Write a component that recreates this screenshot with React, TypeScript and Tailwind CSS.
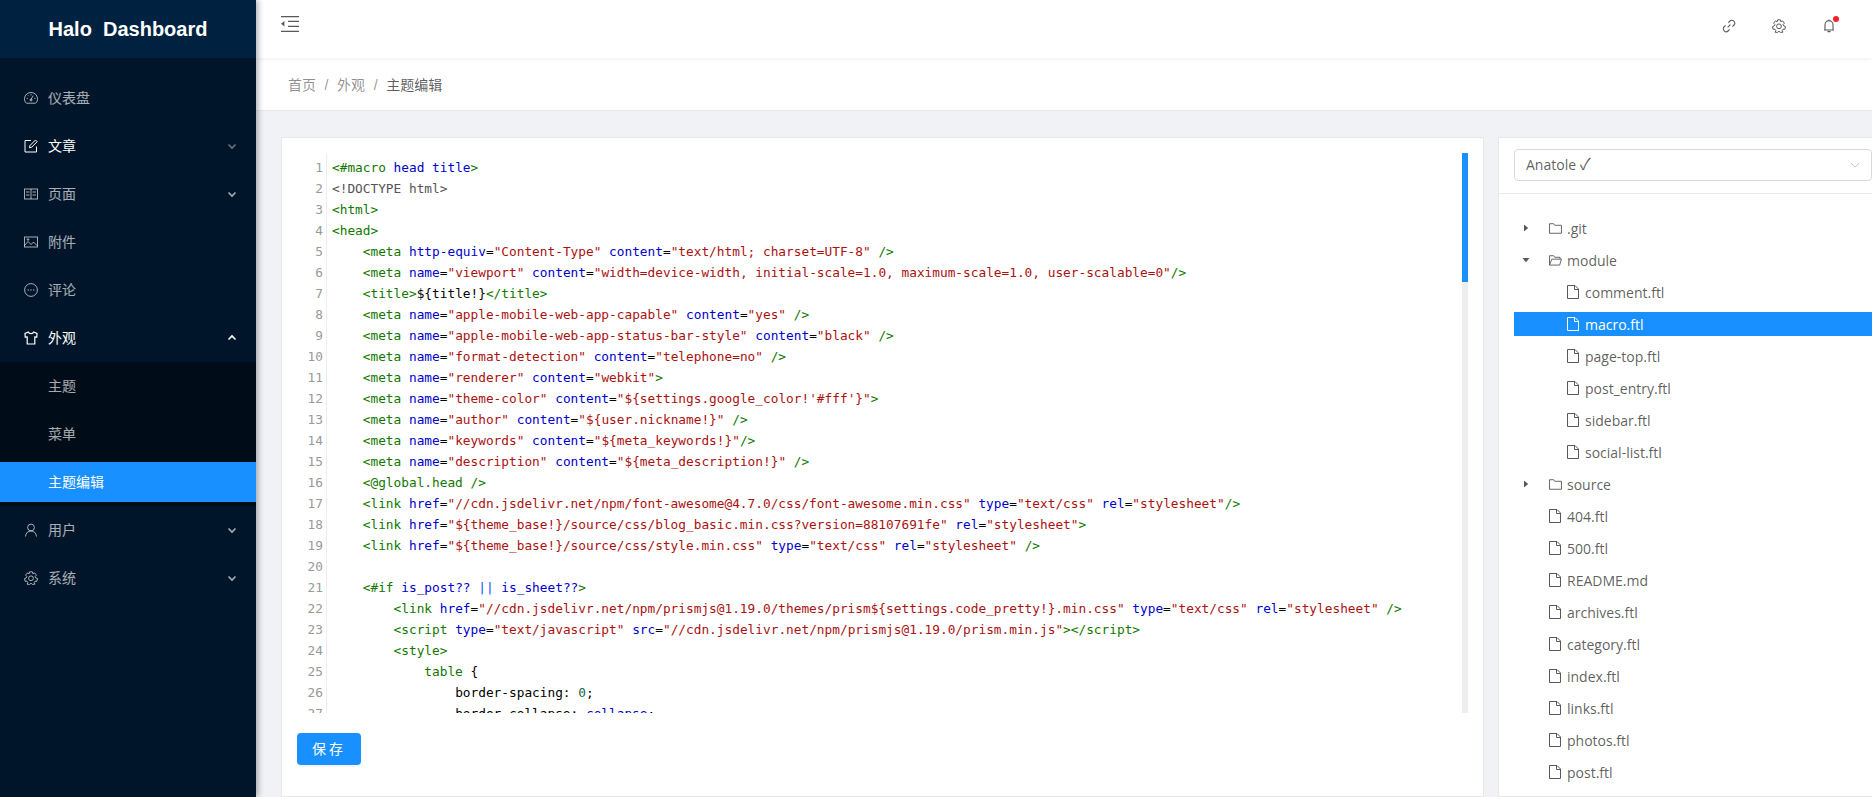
import React from "react";

const T = ({ c }: { c: string }) => <span className="text-[#117700]">{c}</span>;
const A = ({ c }: { c: string }) => <span className="text-[#0000cc]">{c}</span>;
const S = ({ c }: { c: string }) => <span className="text-[#aa1111]">{c}</span>;

const meta = (pairs: [string, string][], end: string) => (
  <>
    <T c="<meta" />
    {pairs.map(([a, s], i) => (
      <React.Fragment key={i}>
        {" "}
        <A c={a} />=<S c={s} />
      </React.Fragment>
    ))}
    <T c={end} />
  </>
);
const tag = (name: string, pairs: [string, string][], end: string) => (
  <>
    <T c={"<" + name} />
    {pairs.map(([a, s], i) => (
      <React.Fragment key={i}>
        {" "}
        <A c={a} />=<S c={s} />
      </React.Fragment>
    ))}
    <T c={end} />
  </>
);

const lines: React.ReactNode[] = [
  <><T c="<#macro" /> <A c="head" /> <A c="title" /><T c=">" /></>,
  <span className="text-[#555555]">{"<!DOCTYPE html>"}</span>,
  <T c="<html>" />,
  <T c="<head>" />,
  <>{"    "}{meta([["http-equiv", '"Content-Type"'], ["content", '"text/html; charset=UTF-8"']], " />")}</>,
  <>{"    "}{meta([["name", '"viewport"'], ["content", '"width=device-width, initial-scale=1.0, maximum-scale=1.0, user-scalable=0"']], "/>")}</>,
  <>{"    "}<T c="<title>" /><span>{"${title!}"}</span><T c="</title>" /></>,
  <>{"    "}{meta([["name", '"apple-mobile-web-app-capable"'], ["content", '"yes"']], " />")}</>,
  <>{"    "}{meta([["name", '"apple-mobile-web-app-status-bar-style"'], ["content", '"black"']], " />")}</>,
  <>{"    "}{meta([["name", '"format-detection"'], ["content", '"telephone=no"']], " />")}</>,
  <>{"    "}{meta([["name", '"renderer"'], ["content", '"webkit"']], ">")}</>,
  <>{"    "}{meta([["name", '"theme-color"'], ["content", `"\${settings.google_color!'#fff'}"`]], ">")}</>,
  <>{"    "}{meta([["name", '"author"'], ["content", '"${user.nickname!}"']], " />")}</>,
  <>{"    "}{meta([["name", '"keywords"'], ["content", '"${meta_keywords!}"']], "/>")}</>,
  <>{"    "}{meta([["name", '"description"'], ["content", '"${meta_description!}"']], " />")}</>,
  <>{"    "}<T c="<@global.head />" /></>,
  <>{"    "}{tag("link", [["href", '"//cdn.jsdelivr.net/npm/font-awesome@4.7.0/css/font-awesome.min.css"'], ["type", '"text/css"'], ["rel", '"stylesheet"']], "/>")}</>,
  <>{"    "}{tag("link", [["href", '"${theme_base!}/source/css/blog_basic.min.css?version=88107691fe"'], ["rel", '"stylesheet"']], ">")}</>,
  <>{"    "}{tag("link", [["href", '"${theme_base!}/source/css/style.min.css"'], ["type", '"text/css"'], ["rel", '"stylesheet"']], " />")}</>,
  <>{" "}</>,
  <>{"    "}<T c="<#if" /> <A c="is_post??" /> <span className="text-[#0055ff]">||</span> <A c="is_sheet??" /><T c=">" /></>,
  <>{"        "}{tag("link", [["href", '"//cdn.jsdelivr.net/npm/prismjs@1.19.0/themes/prism${settings.code_pretty!}.min.css"'], ["type", '"text/css"'], ["rel", '"stylesheet"']], " />")}</>,
  <>{"        "}{tag("script", [["type", '"text/javascript"'], ["src", '"//cdn.jsdelivr.net/npm/prismjs@1.19.0/prism.min.js"']], "></script>")}</>,
  <>{"        "}<T c="<style>" /></>,
  <>{"            "}<T c="table" /> {"{"}</>,
  <>{"                "}border-spacing: <span className="text-[#116644]">0</span>;</>,
  <>{"                "}border-collapse: <A c="collapse" />;</>,
];

const Chev = ({ up, dim }: { up?: boolean; dim?: boolean }) => (
  <svg width="10" height="10" viewBox="0 0 10 10" className={"ml-auto " + (dim ? "opacity-40" : up ? "opacity-100" : "opacity-65")}>
    <path d={up ? "M1.5 6.5 L5 3 L8.5 6.5" : "M1.5 3.5 L5 7 L8.5 3.5"} fill="none" stroke="#fff" strokeWidth="1.6" />
  </svg>
);

const I = ({ children }: { children: React.ReactNode }) => (
  <svg width="14" height="14" viewBox="0 0 14 14" fill="none" stroke="currentColor" strokeWidth="1" className="shrink-0">
    {children}
  </svg>
);

const icons: Record<string, React.ReactNode> = {
  dash: <I><path d="M2.4 12.2 C.9 11 .4 9.2 .5 7.4 C.8 3.8 3.6 1.5 7 1.5 C10.4 1.5 13.2 3.8 13.5 7.4 C13.6 9.2 13.1 11 11.6 12.2 Z" /><path d="M7 8.5 L9.2 4.6 M2.6 7.4 H3.8 M11.4 7.4 H10.2 M4 4.4 L4.8 5.2 M7 3.2 V4.4" /><circle cx="7" cy="9" r="1" /></I>,
  edit: <I><path d="M12.5 7.5 V13 H1 V1.5 H7" /><path d="M5.5 8.8 L6 6.5 L11.5 1 L13.2 2.7 L7.7 8.2 Z" /></I>,
  book: <I><rect x=".5" y="2" width="13" height="10" /><path d="M7 2 V12 M2 5 H5.5 M2 8 H5.5 M8.5 5 H12 M8.5 8 H12" /></I>,
  pic: <I><rect x=".5" y="2" width="13" height="10" /><path d="M.5 10.5 L4 6.5 L7 9.5 L9.5 7 L13.5 11" /><circle cx="4" cy="4.5" r=".8" /></I>,
  msg: (
    <I>
      <circle cx="7" cy="7" r="6.4" />
      <circle cx="4.2" cy="7" r=".7" fill="currentColor" stroke="none" />
      <circle cx="7" cy="7" r=".7" fill="currentColor" stroke="none" />
      <circle cx="9.8" cy="7" r=".7" fill="currentColor" stroke="none" />
    </I>
  ),
  shirt: <I><path d="M4.5 1 L1 2.5 L1.2 6 L3.2 5.8 V13 H10.8 V5.8 L12.8 6 L13 2.5 L9.5 1 C9.2 3.2 4.8 3.2 4.5 1 Z" strokeWidth="1.2" /></I>,
  user: <I><circle cx="7" cy="4.5" r="3.4" /><path d="M1.5 13.5 C1.8 10 4 8 7 8 C10 8 12.2 10 12.5 13.5" /></I>,
  gear: <I><path d="M5.7 .8 H8.3 L8.8 2.7 L10.6 1.9 L12.4 4.2 L11.1 5.6 L11.9 7 L13.5 7.6 L12.9 10.3 L11 10.2 L10.2 11.6 L10.9 13.2 L8.4 13.4 L7 12.2 L5.6 13.4 L3.1 13.2 L3.8 11.6 L3 10.2 L1.1 10.3 L.5 7.6 L2.1 7 L2.9 5.6 L1.6 4.2 L3.4 1.9 L5.2 2.7 Z" strokeLinejoin="round" /><circle cx="7" cy="7.3" r="2.4" /></I>,
};

const Item = ({ icon, label, chev, bright }: { icon: string; label: string; chev?: "up" | "down" | "dim"; bright?: boolean }) => (
  <div className={"h-10 mb-2 flex items-center gap-2.5 pl-6 pr-[19px] text-sm " + (bright ? "text-white" : "text-white/65")}>
    {icons[icon]}
    <span>{label}</span>
    {chev && <Chev up={chev === "up"} dim={chev === "dim"} />}
  </div>
);

const FileIcon = ({ color = "#595959" }: { color?: string }) => (
  <svg width="12" height="14" viewBox="0 0 12 14" fill="none" stroke={color} strokeWidth="1" className="shrink-0">
    <path d="M.5 .5 H8 L11.5 4 V13.5 H.5 Z M7.5 .5 V4.5 H11.5" />
  </svg>
);

const Caret = ({ open }: { open?: boolean }) => (
  <svg width="10" height="10" viewBox="0 0 10 10" className="shrink-0" fill="#595959">
    {open ? <path d="M1.5 3 H8.5 L5 7.2 Z" /> : <path d="M3 1.5 L7.2 5 L3 8.5 Z" />}
  </svg>
);

const Folder = ({ open }: { open?: boolean }) => (
  <svg width="13" height="11" viewBox="0 0 14 12" fill="none" stroke="#595959" strokeWidth="1" className="shrink-0">
    {open ? <path d="M.5 11 V.8 H5 L6.2 2.5 H12 V4.5 M.5 11 H11.5 L13.5 4.5 H3 L.5 11" /> : <path d="M.5 11.2 V.8 H5 L6.2 2.5 H13.5 V11.2 Z" />}
  </svg>
);

const Row = ({ children, selected }: { children: React.ReactNode; selected?: boolean }) => (
  <div className={"h-6 mb-[8px] flex items-center text-sm " + (selected ? "bg-[#1890ff] text-white" : "text-[rgba(0,0,0,0.65)]")}>
    {children}
  </div>
);

const DirRow = ({ name, open }: { name: string; open?: boolean }) => (
  <Row>
    <span className="w-6 mr-[11px] flex justify-center"><Caret open={open} /></span>
    <Folder open={open} />
    <span className="ml-[5px] pt-[2px]">{name}</span>
  </Row>
);

const FileRow = ({ name, indent, selected }: { name: string; indent?: boolean; selected?: boolean }) => (
  <Row selected={selected}>
    <span className={indent ? "w-[53px] shrink-0" : "w-[35px] shrink-0"} />
    <FileIcon color={selected ? "#ffffff" : "#595959"} />
    <span className="ml-[6px] pt-[2px]">{name}</span>
  </Row>
);

export default function App() {
  return (
    <div className="h-[797px] w-[1872px] overflow-hidden flex bg-[#f0f2f5] font-['Liberation_Sans','Noto_Sans_CJK_SC',sans-serif]">
      <aside className="w-[256px] shrink-0 bg-[#001529] shadow-[2px_0_6px_rgba(0,21,41,0.35)] relative z-10 flex flex-col">
        <div className="h-[58px] bg-[#002140] flex items-center justify-center pb-[1px] text-white text-xl font-bold whitespace-pre">Halo  Dashboard</div>
        <nav className="pt-5">
          <Item icon="dash" label="仪表盘" />
          <Item icon="edit" label="文章" chev="dim" bright />
          <Item icon="book" label="页面" chev="down" />
          <Item icon="pic" label="附件" />
          <Item icon="msg" label="评论" />
          <div className="h-10 flex items-center gap-2.5 pl-6 pr-[19px] text-sm text-white">
            {icons.shirt}
            <span>外观</span>
            <Chev up />
          </div>
          <div className="bg-[#000c17] mt-1 mb-1 py-1">
            <div className="h-10 mb-2 flex items-center pl-12 text-sm text-white/65">主题</div>
            <div className="h-10 mb-2 flex items-center pl-12 text-sm text-white/65">菜单</div>
            <div className="h-10 flex items-center pl-12 text-sm text-white bg-[#1890ff]">主题编辑</div>
          </div>
          <Item icon="user" label="用户" chev="down" />
          <Item icon="gear" label="系统" chev="down" />
        </nav>
      </aside>

      <div className="flex-1 min-w-0 flex flex-col">
        <header className="h-[58px] shrink-0 bg-white shadow-[0_1px_4px_rgba(0,21,41,0.08)] relative z-[1] flex items-center pl-[25px] pr-[36px]">
          <svg width="18" height="16" viewBox="0 0 18 16" fill="#595959" className="mb-[10px]">
            <path d="M0 0 H18 V1.3 H0 Z M7 4.7 H18 V6 H7 Z M7 9.7 H18 V11 H7 Z M0 14.7 H18 V16 H0 Z M0 7.8 L3.4 5 V10.6 Z" />
          </svg>
          <div className="ml-auto flex items-center gap-9 pb-[6px] text-[#595959]">
            <svg width="14" height="14" viewBox="0 0 14 14" fill="none" stroke="currentColor" strokeWidth="1.1">
              <path d="M5.6 8.4 L8.4 5.6 M6.4 3.6 L8 2 C9 1 10.6 1 11.8 2.2 C13 3.4 13 5 12 6 L10.4 7.6 M7.6 10.4 L6 12 C5 13 3.4 13 2.2 11.8 C1 10.6 1 9 2 8 L3.6 6.4" />
            </svg>
            {icons.gear}
            <span className="relative flex">
              <svg width="14" height="14" viewBox="0 0 14 14" fill="none" stroke="currentColor" strokeWidth="1.1">
                <path d="M2 11 H12 M3 11 V5.8 C3 3.4 4.8 1.6 7 1.6 C9.2 1.6 11 3.4 11 5.8 V11 M7 .4 V1.6 M5.5 12.6 H8.5" />
              </svg>
              <span className="absolute -top-[3px] -right-[3px] w-[6px] h-[6px] rounded-full bg-[#f5222d]" />
            </span>
          </div>
        </header>

        <div className="h-[53px] shrink-0 bg-white border-b border-[#e8e8e8] flex items-center pl-[32px] pt-[2px] text-sm text-black/45">
          <span>首页</span>
          <span className="mx-[8.6px]">/</span>
          <span>外观</span>
          <span className="mx-[8.6px]">/</span>
          <span className="text-black/65">主题编辑</span>
        </div>

        <main className="flex-1 min-h-0 flex pt-[26px] pl-[25px] gap-[14px]">
          <section className="w-[1203px] shrink-0 bg-white border border-[#e8e8e8] pt-[15px] pl-[15px] pr-[15px] flex flex-col">
            <div className="h-[560px] shrink-0 overflow-hidden flex relative">
              <div className="w-[30px] shrink-0 border-r border-[#eeeeee] mr-[5px] font-['DejaVu_Sans_Mono',monospace] text-[12.79px] leading-[21px] text-[#999999] text-right pr-[3px] pt-[4px] overflow-hidden">
                {lines.map((_, i) => <div key={i} className="h-[21px]">{i + 1}</div>)}
              </div>
              <div className="flex-1 min-w-0 pt-[4px] font-['DejaVu_Sans_Mono',monospace] text-[12.79px] leading-[21px] text-black whitespace-pre overflow-hidden">
                {lines.map((l, i) => <div key={i} className="h-[21px]">{l}</div>)}
              </div>
              <div className="w-[6px] shrink-0 bg-[#eeeeee] ml-2">
                <div className="w-full h-[129px] bg-[#1890ff]" />
              </div>
            </div>
            <button className="mt-5 w-[64px] h-[32px] rounded bg-[#1890ff] text-white text-sm tracking-[3px] shadow-[0_2px_0_rgba(0,0,0,0.045)] self-start">保存</button>
          </section>

          <section className="w-[390px] shrink-0 bg-white border border-[#e8e8e8] flex flex-col">
            <div className="h-[56px] shrink-0 border-b border-[#e8e8e8] pt-[11px] pl-[15px] pr-[15px]">
              <div className="w-full h-8 rounded border border-[#d9d9d9] flex items-center pl-[11px] pr-[11px] text-sm text-black/65 font-['Open_Sans','Noto_Sans_CJK_SC',sans-serif]">
                <span>Anatole <span className="text-base leading-none">✓</span></span>
                <svg width="10" height="10" viewBox="0 0 12 12" className="ml-auto" fill="none" stroke="#bfbfbf" strokeWidth="1.1"><path d="M1 3.5 L6 8.5 L11 3.5" /></svg>
              </div>
            </div>
            <div className="pt-[22px] pl-[15px] pr-[15px] font-['Open_Sans','Noto_Sans_CJK_SC',sans-serif]">
              <DirRow name=".git" />
              <DirRow name="module" open />
              <FileRow name="comment.ftl" indent />
              <FileRow name="macro.ftl" indent selected />
              <FileRow name="page-top.ftl" indent />
              <FileRow name="post_entry.ftl" indent />
              <FileRow name="sidebar.ftl" indent />
              <FileRow name="social-list.ftl" indent />
              <DirRow name="source" />
              {["404.ftl", "500.ftl", "README.md", "archives.ftl", "category.ftl", "index.ftl", "links.ftl", "photos.ftl", "post.ftl"].map((n) => <FileRow key={n} name={n} />)}
            </div>
          </section>
        </main>
      </div>
    </div>
  );
}
